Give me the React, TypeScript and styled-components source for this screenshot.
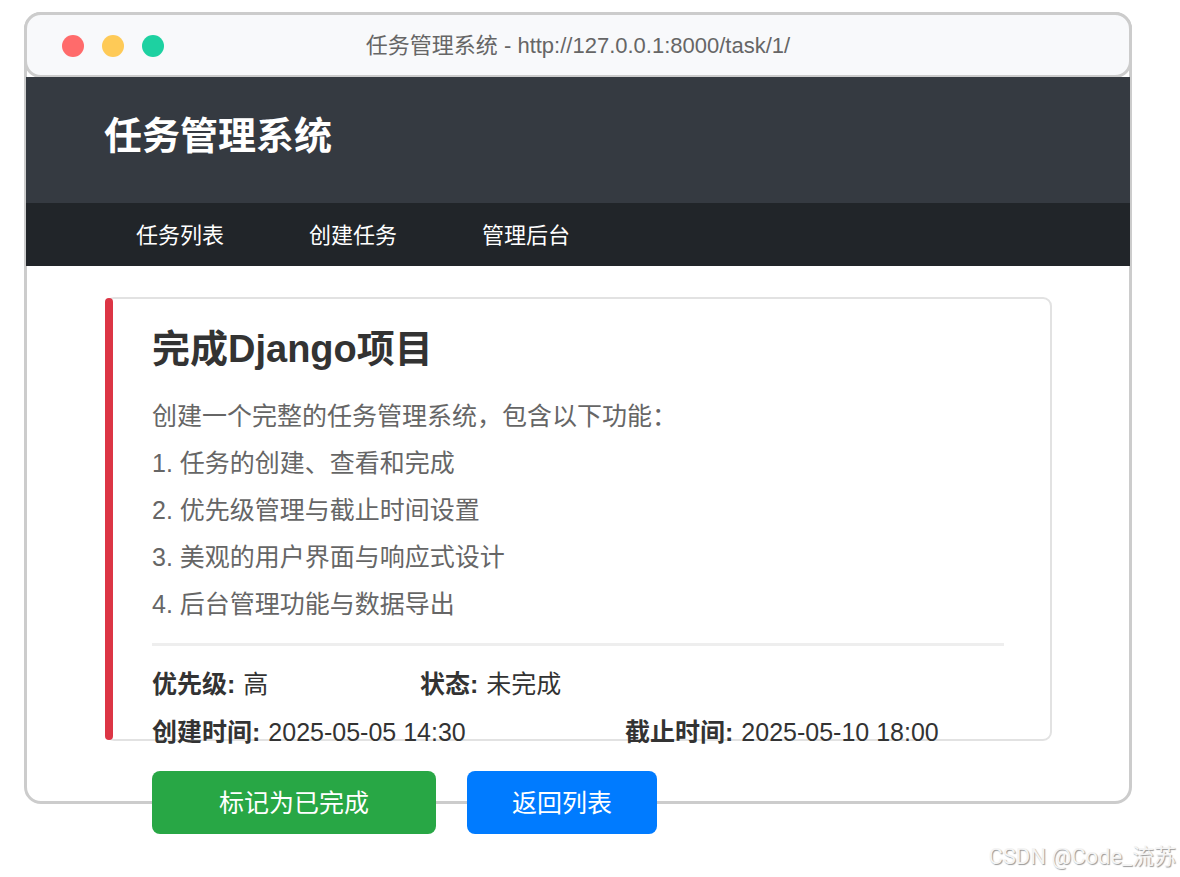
import React from "react";
import styled, { createGlobalStyle } from "styled-components";

const GlobalStyle = createGlobalStyle`
  *, *::before { box-sizing: border-box; }
  body {
    margin: 0;
    background: #fff;
    color: #333;
    font-family: "Liberation Sans", "Noto Sans CJK SC", sans-serif;
  }
`;

const Page = styled.div`
  padding: 12px 48px 0 24px;
`;

const BrowserWindow = styled.div`
  display: flex;
  flex-direction: column;
  border: 3px solid #ccc;
  border-radius: 17px;
`;

const TitleBar = styled.div`
  display: grid;
  grid-template-columns: 1fr auto 1fr;
  align-items: center;
  height: 66px;
  margin: -3px -3px 0;
  padding: 2px 35px 0;
  border: 3px solid #ccc;
  border-radius: 17px;
  background: #f8f9fb;
`;

const Dots = styled.div`
  display: flex;
  gap: 18px;
`;

const Dot = styled.span<{ $color: string }>`
  width: 22px;
  height: 22px;
  border-radius: 50%;
  background: ${(p) => p.$color};
`;

const Address = styled.div`
  color: #666;
  font-size: 22px;
  line-height: 32px;
  white-space: nowrap;
`;

const SiteHeader = styled.header`
  margin: -1px -1px 0;
  background: #353a41;
  color: #fff;
`;

const SiteTitle = styled.h1`
  margin: 0;
  padding: 31px 78px 39px;
  font-size: 38px;
  line-height: 56px;
`;

const Nav = styled.nav`
  display: flex;
  gap: 85px;
  padding: 17px 110px 14px;
  background: #212529;
`;

const NavLink = styled.a`
  color: #fff;
  font-size: 22px;
  line-height: 32px;
  text-decoration: none;
  white-space: nowrap;
`;

const Main = styled.main`
  padding: 31px 77px 0 78px;
`;

const Card = styled.article`
  position: relative;
  padding: 23px 46px 0 45px;
  border: 2px solid #e2e2e2;
  border-radius: 9px;

  &::before {
    content: "";
    position: absolute;
    top: -1px;
    bottom: -1px;
    left: -2px;
    width: 8px;
    border-radius: 4px;
    background: #dc3545;
  }
`;

const TaskTitle = styled.h2`
  margin: 0 0 17px;
  font-size: 38px;
  line-height: 54px;
`;

const Description = styled.div`
  padding-bottom: 15px;
  border-bottom: 3px solid #eee;
  color: #666;
  font-size: 25px;
  line-height: 47px;

  p { margin: 0; }
`;

const Meta = styled.dl`
  margin: 14px 0 -17px;
  font-size: 25px;
  line-height: 48px;
`;

const MetaRow = styled.div`
  display: flex;
`;

const MetaItem = styled.div<{ $width?: number }>`
  flex: 0 0 ${(p) => (p.$width ? `${p.$width}px` : "auto")};
  display: flex;
  gap: 8px;
  white-space: nowrap;

  dt { font-weight: bold; }
  dd { margin: 0; }
`;

const Actions = styled.div`
  display: flex;
  gap: 31px;
  margin: 30px 0 -33px;
  padding-left: 47px;
`;

const Button = styled.button<{ $color: string; $pad: number }>`
  padding: 1px ${(p) => p.$pad}px 0;
  border: 0;
  border-radius: 8px;
  background: ${(p) => p.$color};
  color: #fff;
  font-family: inherit;
  font-size: 25px;
  line-height: 62px;
  white-space: nowrap;
`;

const Watermark = styled.footer`
  margin: 39px -44px 0 0;
  color: #f4f4f4;
  font-family: Roboto, "Noto Sans CJK SC", sans-serif;
  font-size: 22px;
  line-height: 28px;
  text-align: right;
  text-shadow: 1px 1px 1px #999;
`;

const navItems = ["任务列表", "创建任务", "管理后台"];

const description = [
  "创建一个完整的任务管理系统，包含以下功能：",
  "1. 任务的创建、查看和完成",
  "2. 优先级管理与截止时间设置",
  "3. 美观的用户界面与响应式设计",
  "4. 后台管理功能与数据导出",
];

export default function App() {
  return (
    <Page lang="zh-CN">
      <GlobalStyle />
      <BrowserWindow>
        <TitleBar>
          <Dots>
            <Dot $color="#ff6b6b" />
            <Dot $color="#feca57" />
            <Dot $color="#1dd1a1" />
          </Dots>
          <Address>任务管理系统 - http://127.0.0.1:8000/task/1/</Address>
        </TitleBar>
        <SiteHeader>
          <SiteTitle>任务管理系统</SiteTitle>
          <Nav>
            {navItems.map((item) => (
              <NavLink href="#" key={item}>{item}</NavLink>
            ))}
          </Nav>
        </SiteHeader>
        <Main>
          <Card>
            <TaskTitle>完成Django项目</TaskTitle>
            <Description>
              {description.map((line) => (
                <p key={line}>{line}</p>
              ))}
            </Description>
            <Meta>
              <MetaRow>
                <MetaItem $width={268}><dt>优先级:</dt><dd>高</dd></MetaItem>
                <MetaItem><dt>状态:</dt><dd>未完成</dd></MetaItem>
              </MetaRow>
              <MetaRow>
                <MetaItem $width={473}><dt>创建时间:</dt><dd>2025-05-05 14:30</dd></MetaItem>
                <MetaItem><dt>截止时间:</dt><dd>2025-05-10 18:00</dd></MetaItem>
              </MetaRow>
            </Meta>
          </Card>
          <Actions>
            <Button type="button" $color="#28a745" $pad={67}>标记为已完成</Button>
            <Button type="button" $color="#007bff" $pad={45}>返回列表</Button>
          </Actions>
        </Main>
      </BrowserWindow>
      <Watermark>CSDN @Code_流苏</Watermark>
    </Page>
  );
}
